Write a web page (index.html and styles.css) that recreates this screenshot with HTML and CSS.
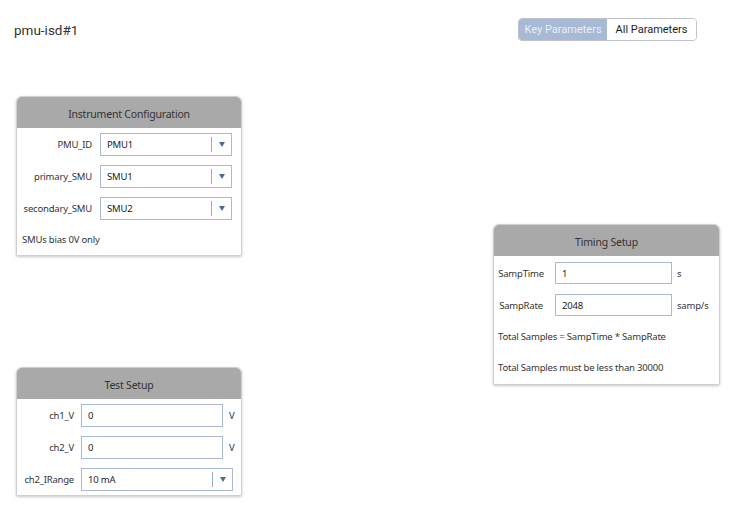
FILE: index.html
```html
<!DOCTYPE html>
<html lang="en">
<head>
<meta charset="utf-8">
<title>pmu-isd#1</title>
<link rel="stylesheet" href="styles.css">
</head>
<body>
<div class="page">
  <header class="topbar">
    <h1 class="title">pmu-isd#1</h1>
    <div class="toggle">
      <span class="toggle-btn active">Key Parameters</span>
      <span class="toggle-btn">All Parameters</span>
    </div>
  </header>

  <main class="canvas">
    <div class="column col-left">
      <section class="panel panel-instr">
        <div class="panel-head">Instrument Configuration</div>
        <div class="panel-body">
          <div class="row">
            <label class="lbl lbl-instr">PMU_ID</label>
            <div class="select sel-instr"><span class="sel-val">PMU1</span><span class="sel-sep"></span><span class="sel-arrow"></span></div>
          </div>
          <div class="row">
            <label class="lbl lbl-instr">primary_SMU</label>
            <div class="select sel-instr"><span class="sel-val">SMU1</span><span class="sel-sep"></span><span class="sel-arrow"></span></div>
          </div>
          <div class="row">
            <label class="lbl lbl-instr">secondary_SMU</label>
            <div class="select sel-instr"><span class="sel-val">SMU2</span><span class="sel-sep"></span><span class="sel-arrow"></span></div>
          </div>
          <p class="note note-instr">SMUs bias 0V only</p>
        </div>
      </section>

      <section class="panel panel-test">
        <div class="panel-head">Test Setup</div>
        <div class="panel-body">
          <div class="row">
            <label class="lbl lbl-test">ch1_V</label>
            <div class="input inp-test">0</div>
            <span class="unit">V</span>
          </div>
          <div class="row">
            <label class="lbl lbl-test">ch2_V</label>
            <div class="input inp-test">0</div>
            <span class="unit">V</span>
          </div>
          <div class="row">
            <label class="lbl lbl-test">ch2_IRange</label>
            <div class="select sel-test"><span class="sel-val">10 mA</span><span class="sel-sep"></span><span class="sel-arrow"></span></div>
          </div>
        </div>
      </section>
    </div>

    <div class="column col-right">
      <section class="panel panel-timing">
        <div class="panel-head">Timing Setup</div>
        <div class="panel-body">
          <div class="row">
            <label class="lbl lbl-timing">SampTime</label>
            <div class="input inp-timing">1</div>
            <span class="unit unit-timing">s</span>
          </div>
          <div class="row">
            <label class="lbl lbl-timing">SampRate</label>
            <div class="input inp-timing">2048</div>
            <span class="unit unit-timing">samp/s</span>
          </div>
          <p class="note">Total Samples = SampTime * SampRate</p>
          <p class="note">Total Samples must be less than 30000</p>
        </div>
      </section>
    </div>
  </main>
</div>
</body>
</html>
```

FILE: styles.css
```css
* { box-sizing: border-box; }

html, body {
  margin: 0;
  padding: 0;
  background: #ffffff;
}

body {
  font-family: "Noto Sans", "Open Sans", sans-serif;
  color: #333333;
}

.page {
  width: 730px;
  height: 505px;
  overflow: hidden;
}

/* top bar: page title and the parameter-view toggle */
.topbar {
  display: flex;
  justify-content: space-between;
  align-items: flex-start;
  padding: 18px 33px 0 14px;
  height: 42px;
}

.title {
  margin: 4px 0 0 0;
  font-family: Roboto, "Liberation Sans", sans-serif;
  font-size: 13.5px;
  font-weight: 400;
  color: #333333;
  line-height: 16px;
}

.toggle {
  display: flex;
  border: 1px solid #bfc3c9;
  border-radius: 4px;
  overflow: hidden;
  height: 23px;
}

.toggle-btn {
  display: flex;
  align-items: center;
  justify-content: center;
  width: 89px;
  font-family: Roboto, "Liberation Sans", sans-serif;
  font-size: 11px;
  color: #1e1e1e;
  background: #ffffff;
}

.toggle-btn.active {
  width: 88px;
  background: #a7b9d5;
  color: #e9eef6;
}

/* canvas holding the panel columns */
.canvas {
  display: flex;
}

.column {
  display: flex;
  flex-direction: column;
}

.col-left {
  margin-left: 16px;
  padding-top: 54px;
  gap: 111px;
}

.col-right {
  margin-left: 251px;
  padding-top: 182px;
}

/* panels */
.panel {
  background: #ffffff;
  border: 1px solid #cfcfcf;
  border-radius: 6px 6px 2px 2px;
  box-shadow: 0 1px 3px rgba(0, 0, 0, 0.22);
  overflow: hidden;
  letter-spacing: -0.2px;
}

.panel-instr { width: 226px; height: 160px; }
.panel-test  { width: 226px; height: 129px; }
.panel-timing { width: 227px; height: 161px; }

.panel-head {
  height: 31px;
  background: #a9a9a9;
  display: flex;
  align-items: center;
  justify-content: center;
  font-size: 10.5px;
  color: #333333;
  padding-top: 2px;
}

.panel-body {
  display: flex;
  flex-direction: column;
  gap: 9px;
  padding-top: 5px;
}

.row {
  display: flex;
  align-items: center;
}

.lbl {
  font-size: 9.5px;
  color: #333333;
  text-align: right;
  flex: none;
}

.lbl-instr { width: 75px; margin-right: 8px; }
.lbl-test  { width: 57px; margin-right: 7px; }
.lbl-timing { width: 54px; margin-right: 7px; text-align: center; }

/* text inputs */
.input {
  height: 23px;
  border: 1px solid #a8b8d0;
  background: #ffffff;
  display: flex;
  align-items: center;
  padding-left: 6px;
  font-size: 9.5px;
  color: #222222;
  flex: none;
}

.inp-test { width: 142px; }
.inp-timing { width: 117px; height: 22px; }

.unit {
  font-size: 9.5px;
  color: #333333;
  margin-left: 6px;
}

.unit-timing { margin-left: 5px; }

/* drop-down fields */
.select {
  height: 23px;
  border: 1px solid #a8b8d0;
  background: #ffffff;
  display: flex;
  align-items: center;
  font-size: 9.5px;
  color: #222222;
  flex: none;
}

.sel-instr { width: 132px; }
.sel-test { width: 152px; }

.sel-val {
  flex: 1;
  padding-left: 6px;
}

.sel-sep {
  width: 1px;
  height: 15px;
  background: #9aa9c0;
}

.sel-arrow {
  width: 19px;
  display: flex;
  justify-content: center;
}

.sel-arrow::before {
  content: "";
  display: block;
  border-left: 3.5px solid transparent;
  border-right: 3.5px solid transparent;
  border-top: 5px solid #4a6a9c;
}

.note {
  margin: 0;
  font-size: 9.5px;
  color: #333333;
  padding-left: 5px;
}

.note-instr { margin-top: 4px; }

.panel-timing .panel-body { gap: 10px; padding-top: 6px; }
.panel-timing .note { padding-left: 4px; margin-top: 4px; }
.panel-timing .note + .note { margin-top: 8px; }
```
